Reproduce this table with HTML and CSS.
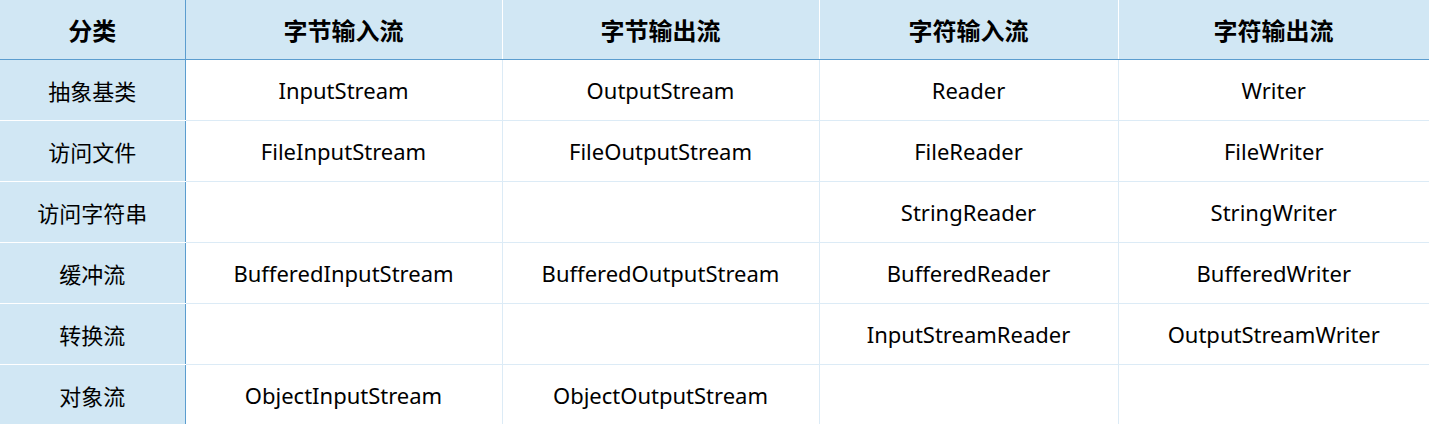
FILE: index.html
```html
<!DOCTYPE html>
<html lang="zh">
<head>
<meta charset="utf-8">
<title>IO流分类</title>
<link rel="stylesheet" href="styles.css">
</head>
<body>
<table class="io-table">
  <colgroup>
    <col class="c-cat">
    <col class="c-a">
    <col class="c-b">
    <col class="c-c">
    <col class="c-d">
  </colgroup>
  <thead>
    <tr>
      <th>分类</th>
      <th>字节输入流</th>
      <th>字节输出流</th>
      <th>字符输入流</th>
      <th>字符输出流</th>
    </tr>
  </thead>
  <tbody>
    <tr><th class="rh">抽象基类</th><td>InputStream</td><td>OutputStream</td><td>Reader</td><td>Writer</td></tr>
    <tr><th class="rh">访问文件</th><td>FileInputStream</td><td>FileOutputStream</td><td>FileReader</td><td>FileWriter</td></tr>
    <tr><th class="rh">访问字符串</th><td></td><td></td><td>StringReader</td><td>StringWriter</td></tr>
    <tr><th class="rh">缓冲流</th><td>BufferedInputStream</td><td>BufferedOutputStream</td><td>BufferedReader</td><td>BufferedWriter</td></tr>
    <tr><th class="rh">转换流</th><td></td><td></td><td>InputStreamReader</td><td>OutputStreamWriter</td></tr>
    <tr><th class="rh">对象流</th><td>ObjectInputStream</td><td>ObjectOutputStream</td><td></td><td></td></tr>
  </tbody>
</table>
</body>
</html>
```
FILE: styles.css
```css
html, body {
  margin: 0;
  padding: 0;
  background: #ffffff;
}
body {
  font-family: "Noto Sans", "Noto Sans CJK SC", sans-serif;
  color: #000;
}
.io-table {
  border-collapse: collapse;
  table-layout: fixed;
  width: 1429px;
}
.c-cat { width: 185px; }
.c-a { width: 317px; }
.c-b { width: 317px; }
.c-c { width: 299px; }
.c-d { width: 311px; }

.io-table thead th {
  height: 59px;
  padding: 0;
  background: #d1e7f4;
  font-size: 24px;
  font-weight: 700;
  text-align: center;
  vertical-align: middle;
  border-left: 1px solid #ffffff;
  border-right: 1px solid #ffffff;
  border-bottom: 1px solid #5b9dcf;
}
.io-table thead th:first-child {
  border-left: none;
  border-right: 1px solid #5b9dcf;
}
.io-table tbody td,
.io-table tbody th {
  height: 60px;
  padding: 0;
  font-weight: 400;
  text-align: center;
  vertical-align: middle;
}
.io-table tbody td {
  font-size: 22px;
  border: 1px solid #dcebf6;
}
.io-table tbody tr:first-child td {
  border-top: 1px solid #5b9dcf;
}
.io-table tbody tr:last-child td {
  border-bottom: none;
}
.io-table tbody td:last-child {
  border-right: none;
}
.io-table .rh {
  font-size: 22px;
  background: #d1e7f4;
  border-right: 1px solid #5b9dcf;
  border-bottom: 1px solid #ffffff;
  border-left: none;
}
.io-table tbody tr:first-child .rh {
  border-top: 1px solid #5b9dcf;
}
.io-table tbody tr:last-child .rh {
  border-bottom: none;
}
```
